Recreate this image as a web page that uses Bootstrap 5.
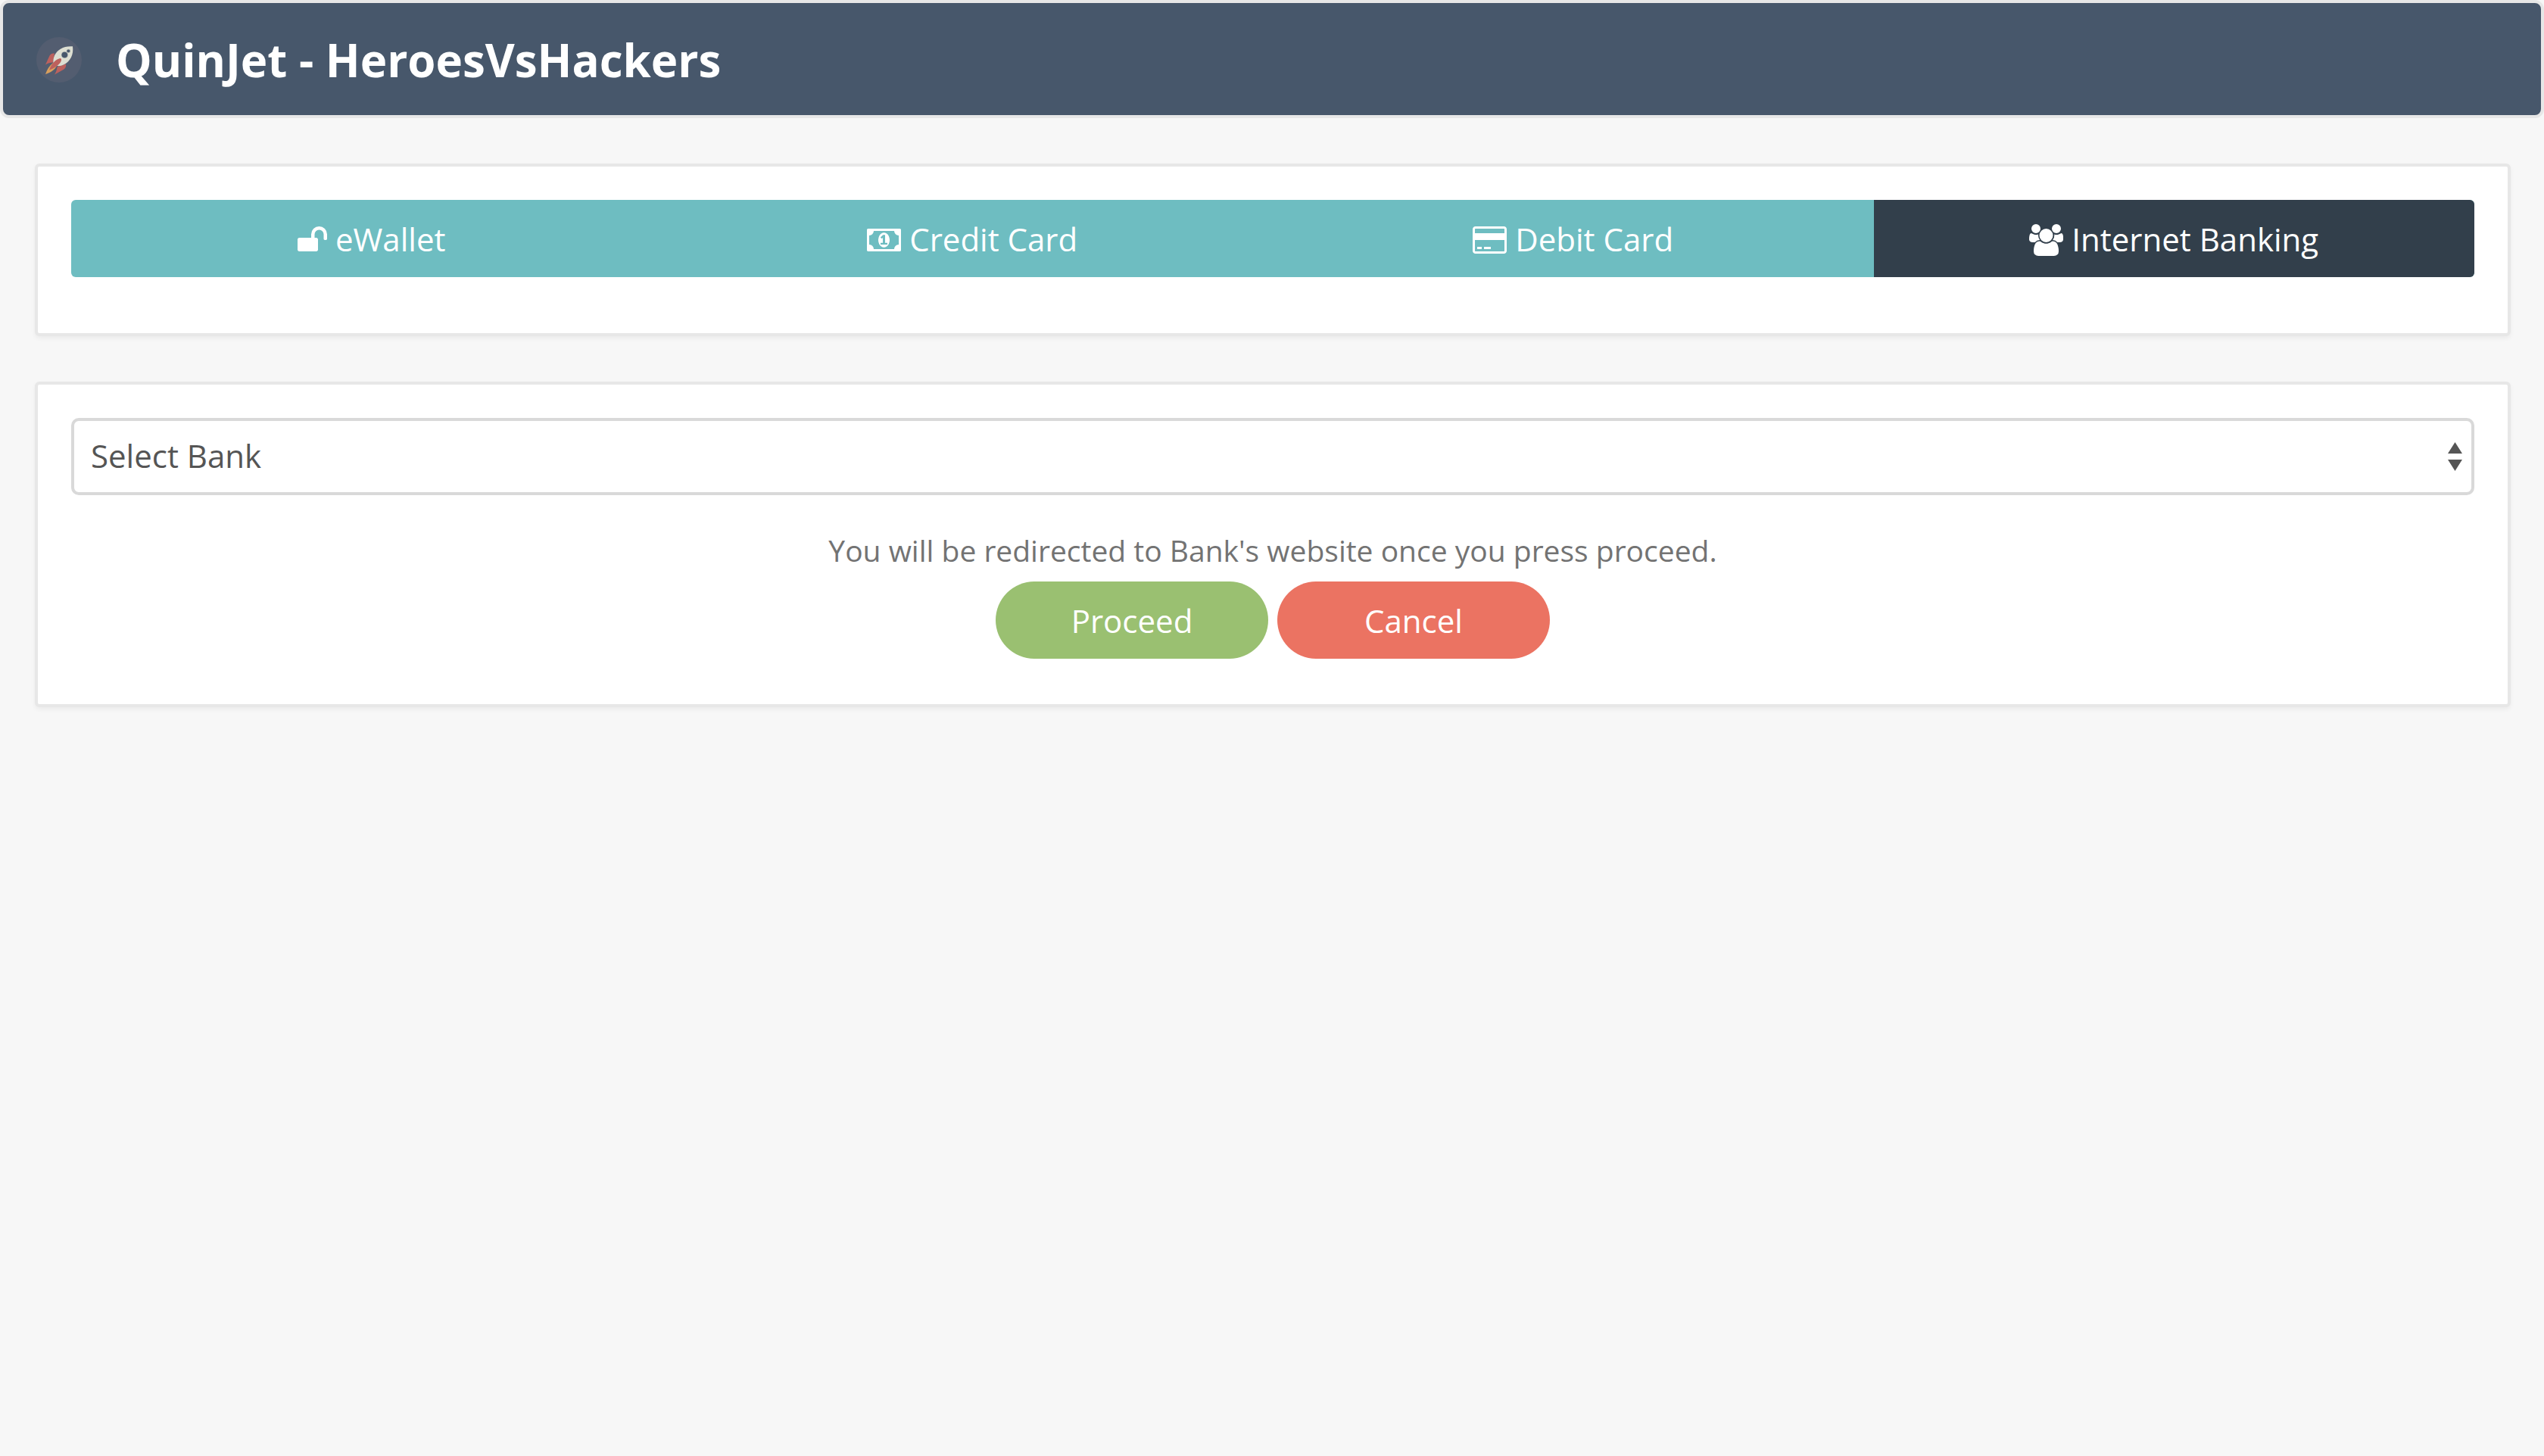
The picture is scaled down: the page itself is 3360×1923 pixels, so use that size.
<!DOCTYPE html>
<html lang="en">
<head>
<meta charset="utf-8">
<meta name="viewport" content="width=device-width, initial-scale=1">
<title>QuinJet - HeroesVsHackers</title>
<link href="https://cdn.jsdelivr.net/npm/bootstrap@5.3.0/dist/css/bootstrap.min.css" rel="stylesheet">
<style>
  body { background: #f7f7f7; color: #555; font-family: "Open Sans", "Noto Sans", sans-serif; font-size: 42px; line-height: 60px; }
  .app-header { background: #47576b; border: 4px solid #e7e7e7; border-radius: 12px; padding: 34px 44px 32px; }
  .app-title { font-size: 60px; line-height: 82px; font-weight: 700; }
  .app-logo { width: 60px; height: 60px; margin-right: 45px; }
  .app-main { padding: 60px 44px 0 46px; }
  .panel { --bs-card-border-width: 4px; --bs-card-border-color: #e7e7e7; --bs-card-border-radius: 6px; --bs-card-inner-border-radius: 2px; box-shadow: 0 3px 6px rgba(0, 0, 0, .05); margin-bottom: 60px; }
  .panel .card-body { padding: 44px 44px 60px; }
  .panel .pay-body { padding-bottom: 74px; }
  .pay-tabs { border-radius: 6px; overflow: hidden; background: #6ebdc1; }
  .pay-tabs .nav-link { --bs-nav-link-color: #fff; --bs-nav-link-hover-color: #fff; font-size: 42px; padding: 22px 0 20px; border-radius: 0; }
  .pay-tabs .nav-link.active { background: #323f4b; color: #fff; }
  .fa-icon { height: 42px; fill: currentColor; vertical-align: -6px; }
  .bank-select { font-size: 42px; line-height: 60px; color: #555; border: 4px solid #d9d9d9; border-radius: 10px; padding: 16px 60px 18px 22px; background: #fff url("data:image/svg+xml,%3Csvg xmlns='http://www.w3.org/2000/svg' viewBox='0 0 19 38'%3E%3Cpath fill='%23555' d='M0 15 9.500 0 19 15zM0 23h19L9.500 38z'/%3E%3C/svg%3E") no-repeat right 12px center / 19px 38px; }
  .pay-note { color: #737373; font-size: 39px; margin: 43px 0 11px; }
  .pay-actions { gap: 12px; }
  .pay-actions .btn { width: 360px; font-size: 42px; line-height: 60px; padding: 22px 0 20px; border: 0; color: #fff; }
  .btn-proceed, .btn-proceed:hover { background: #9ac071; }
  .btn-cancel, .btn-cancel:hover { background: #eb7362; }
</style>
<script src="https://cdn.jsdelivr.net/npm/bootstrap@5.3.0/dist/js/bootstrap.bundle.min.js" defer></script>
</head>
<body>
<header class="app-header d-flex align-items-center">
  <svg class="app-logo flex-shrink-0" viewBox="0 0 60 60" aria-hidden="true">
    <circle cx="30" cy="30" r="30" fill="#535d70"/>
    <path d="M24 21.500c-3-.5-5 .5-6.500 3L12 36.500c3-2 6-3 10-3z" fill="#bd615d"/>
    <path d="M39 35.500c.5 3-.2 5-2.500 7l-12.500 7c2-3 3-6 3.500-10z" fill="#bd615d"/>
    <path d="M48 12.300c-11-1-20 3.500-24 12-1.500 3.500-2 7-1.500 10.500l3 3c4 .8 7.500.3 11-1.500C45 32 49.500 23 48 12.300z" fill="#dedfd2"/>
    <path d="M22 34c-5 4-8 9-10 15 6-2 12-5 15-11z" fill="#d99f5d"/>
    <path d="M31.500 28c-6 1-12 8-14.500 15.500C24 41 32 36 33 30.500c.2-1.500-.5-2.500-1.500-2.500z" fill="#bd615d"/>
    <circle cx="37.500" cy="23.500" r="4.600" fill="#aeb3b1"/><circle cx="37.300" cy="23.500" r="3.800" fill="#47576b"/>
    <circle cx="42.500" cy="18.300" r="2.600" fill="#aeb3b1"/><circle cx="42.300" cy="18.300" r="1.900" fill="#47576b"/>
  </svg>
  <h1 class="app-title text-white m-0">QuinJet - HeroesVsHackers</h1>
</header>
<main class="app-main">
  <section class="card panel">
    <div class="card-body pay-body">
      <nav class="nav nav-pills nav-justified pay-tabs" aria-label="Payment method">
        <a class="nav-link" href="#ewallet"><svg class="fa-icon" viewBox="64 0 1664 1792" aria-hidden="true"><path d="M1728 576v256q0 26-19 45t-45 19h-64q-26 0-45-19t-19-45v-256q0-106-75-181t-181-75-181 75-75 181v192h96q40 0 68 28t28 68v576q0 40-28 68t-68 28h-960q-40 0-68-28t-28-68v-576q0-40 28-68t68-28h672v-192q0-185 131.500-316.500t316.500-131.500 316.500 131.500 131.500 316.500z"/></svg> eWallet</a>
        <a class="nav-link" href="#credit"><svg class="fa-icon" viewBox="-64 0 1920 1792" aria-hidden="true"><path d="M704 1152h384v-96h-128v-448h-114l-148 137 77 80q42-37 55-57h2v288h-128v96zm512-256q0 70-21 142t-59.500 134-101.500 101-138 39-138-39-101.500-101-59.500-134-21-142 21-142 59.500-134 101.500-101 138-39 138 39 101.500 101 59.500 134 21 142zm512 256v-512q-106 0-181-75t-75-181h-1152q0 106-75 181t-181 75v512q106 0 181 75t75 181h1152q0-106 75-181t181-75zm128-832v1152q0 26-19 45t-45 19h-1792q-26 0-45-19t-19-45v-1152q0-26 19-45t45-19h1792q26 0 45 19t19 45z"/></svg> Credit Card</a>
        <a class="nav-link" href="#debit"><svg class="fa-icon" viewBox="0 0 1920 1792" aria-hidden="true"><path d="M1760 128q66 0 113 47t47 113v1216q0 66-47 113t-113 47h-1600q-66 0-113-47t-47-113v-1216q0-66 47-113t113-47h1600zm-1600 128q-13 0-22.500 9.500t-9.500 22.500v224h1664v-224q0-13-9.500-22.500t-22.500-9.500h-1600zm1600 1280q13 0 22.500-9.500t9.500-22.500v-608h-1664v608q0 13 9.500 22.500t22.500 9.500h1600zm-1504-128v-128h256v128h-256zm384 0v-128h384v128h-384z"/></svg> Debit Card</a>
        <a class="nav-link active" aria-current="page" href="#banking"><svg class="fa-icon" viewBox="64 0 1920 1792" aria-hidden="true"><path d="M657 896q-162 5-265 128h-134q-82 0-138-40.500t-56-118.500q0-353 124-353 6 0 43.500 21t97.500 42.500 119 21.500q67 0 133-23-5 37-5 66 0 159 93 256zm1071 637q0 120-73 189.500t-194 69.500h-874q-121 0-194-69.500t-73-189.500q0-53 3.500-103.500t14-109 26.500-108.500 43-97.500 62-81 85.500-53.500 111.500-20q10 0 43 21.500t73 48 107 48 135 21.500 135-21.500 107-48 73-48 43-21.500q61 0 111.500 20t85.500 53.500 62 81 43 97.500 26.500 108.500 14 109 3.500 103.500zm-1024-1277q0 106-75 181t-181 75-181-75-75-181 75-181 181-75 181 75 75 181zm704 384q0 159-112.500 271.500t-271.500 112.500-271.500-112.500-112.500-271.500 112.500-271.500 271.500-112.500 271.500 112.500 112.500 271.500zm576 225q0 78-56 118.500t-138 40.500h-134q-103-123-265-128 93-97 93-256 0-29-5-66 66 23 133 23 59 0 119-21.500t97.500-42.500 43.500-21q124 0 124 353zm-128-609q0 106-75 181t-181 75-181-75-75-181 75-181 181-75 181 75 75 181z"/></svg> Internet Banking</a>
      </nav>
    </div>
  </section>
  <section class="card panel">
    <form class="card-body">
      <select class="form-select bank-select" id="bank" aria-label="Bank">
        <option>Select Bank</option>
      </select>
      <p class="pay-note text-center">You will be redirected to Bank's website once you press proceed.</p>
      <div class="pay-actions d-flex justify-content-center">
        <button type="button" class="btn btn-proceed rounded-pill">Proceed</button>
        <button type="button" class="btn btn-cancel rounded-pill">Cancel</button>
      </div>
    </form>
  </section>
</main>
</body>
</html>
